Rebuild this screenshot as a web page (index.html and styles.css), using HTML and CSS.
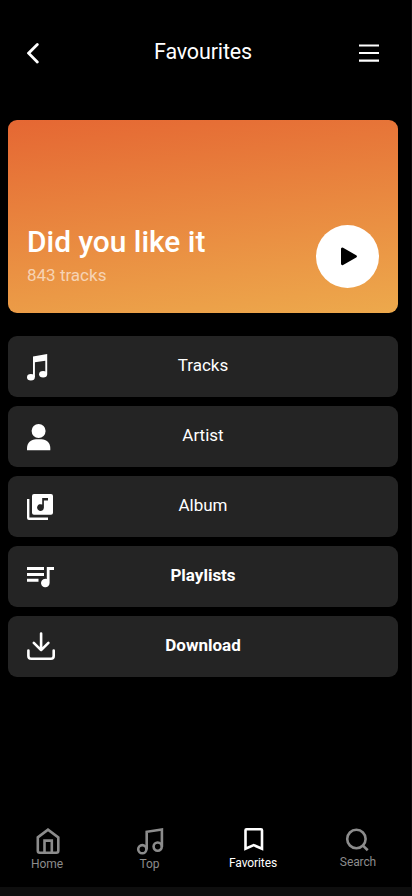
FILE: index.html
```html
<!DOCTYPE html>
<html lang="en">
<head>
<meta charset="utf-8">
<title>Favourites</title>
<link rel="stylesheet" href="styles.css">
</head>
<body>
<div class="screen">
  <header class="header">
    <svg class="back" width="12" height="22" viewBox="0 0 12 22"><path d="M10.300 2.500 1.600 11.200 10.300 20"/></svg>
    <h1 class="title">Favourites</h1>
    <svg class="menu" width="20" height="20" viewBox="0 0 20 20"><path d="M0 3.500h20M0 11h20M0 18.600h20"/></svg>
  </header>
  <section class="hero">
    <div class="hero-text">
      <h2 class="hero-title">Did you like it</h2>
      <p class="hero-sub">843 tracks</p>
    </div>
    <button class="play" aria-label="Play">
      <svg width="63" height="63" viewBox="0 0 63 63"><path d="M26.400 24v14.800L39.500 31.400Z"/></svg>
    </button>
  </section>
  <ul class="list">
    <li class="row">
      <svg class="row-icon" viewBox="0 0 32 36"><path d="M6 8.400 20.200 6V26H18.300V12.800L7.900 14.300V29H6Z"/><ellipse cx="3.900" cy="29.200" rx="3.900" ry="3.200"/><ellipse cx="16.100" cy="26.300" rx="4" ry="3.200"/></svg>
      <span class="label">Tracks</span>
    </li>
    <li class="row">
      <svg class="row-icon" viewBox="0 0 32 36"><circle cx="11.600" cy="13" r="7"/><path d="M0 32.200V30C0 25 4 21.200 9 21.200H14.500C19.500 21.200 23.300 25 23.300 30V32.200Z"/></svg>
      <span class="label">Artist</span>
    </li>
    <li class="row">
      <svg class="row-icon" viewBox="0 0 32 36"><path fill-rule="evenodd" d="M7 6H24a2 2 0 0 1 2 2V24.700a2 2 0 0 1-2 2H7a2 2 0 0 1-2-2V8a2 2 0 0 1 2-2ZM15.200 10V16.600A3.400 3.400 0 1 0 16.900 19.500V12.400H21V10Z"/><path d="M0 11H2.400V29.600H21V32H2a2 2 0 0 1-2-2Z"/></svg>
      <span class="label">Album</span>
    </li>
    <li class="row">
      <svg class="row-icon" viewBox="0 0 32 36"><path d="M0 9H17V12H0ZM0 14.900H17V17.900H0ZM0 20.700H11.500V23.700H0ZM19.800 9H27V12H22.600V25A4.300 4.300 0 1 1 19.800 21Z"/></svg>
      <span class="label strong">Playlists</span>
    </li>
    <li class="row">
      <svg class="row-icon line" viewBox="0 0 32 36"><path d="M14.100 5.500V22M6.800 14.800 14.100 22.100 21.400 14.800M1.400 22.500V28a2.800 2.800 0 0 0 2.800 2.800H23.900a2.800 2.800 0 0 0 2.800-2.800V22.500"/></svg>
      <span class="label strong">Download</span>
    </li>
  </ul>
  <nav class="nav">
    <a class="tab home"><svg width="28" height="28" viewBox="0 0 28 28"><path d="M3.800 10.400 14 2.600 24.300 10.400V23.800a2 2 0 0 1-2 2H5.800a2 2 0 0 1-2-2ZM10.500 25.800V13.600H17.800V25.800"/></svg><span>Home</span></a>
    <a class="tab top"><svg width="28" height="28" viewBox="0 0 28 28"><path d="M10.700 22.500V4.800L25.900 2.500V19.800"/><circle cx="6.300" cy="22.200" r="4.100"/><circle cx="21.700" cy="19.600" r="4.100"/></svg><span>Top</span></a>
    <a class="tab favorites"><svg width="28" height="28" viewBox="0 0 28 28"><path d="M6.500 3.200a1 1 0 0 1 1-1H22a1 1 0 0 1 1 1V21.700L14.700 18.100 6.500 21.700Z"/></svg><span>Favorites</span></a>
    <a class="tab search"><svg width="28" height="28" viewBox="0 0 28 28"><circle cx="12.400" cy="12" r="9.200"/><path d="M18.700 18.400 23.700 23.300"/></svg><span>Search</span></a>
  </nav>
</div>
</body>
</html>
```
FILE: styles.css
```css
* { box-sizing: border-box; margin: 0; padding: 0; }

body {
  background: #0e0e0e;
  font-family: Roboto, "Liberation Sans", sans-serif;
  color: #fff;
  overflow: hidden;
}

.screen {
  display: flex;
  flex-direction: column;
  width: 411px;
  height: 887px;
  background: #000;
}

.header {
  display: grid;
  grid-template-columns: 20px 1fr 20px;
  height: 120px;
  padding: 42px 32px 0 27px;
}

.header svg { fill: none; stroke: #fff; }
.back { stroke-width: 2.8; stroke-linecap: round; }
.menu { stroke-width: 2.2; }

.title {
  margin-top: -2px;
  font-size: 21.5px;
  line-height: 24px;
  letter-spacing: -.15px;
  font-weight: 400;
  text-align: center;
}

.hero {
  display: flex;
  justify-content: space-between;
  width: 390px;
  height: 193px;
  margin-left: 8px;
  padding: 105px 19px 0;
  border-radius: 9px;
  background: linear-gradient(173deg, #e56733, #eda94c);
}

.hero-title { margin-top: -1px; font-size: 29.9px; line-height: 36px; font-weight: 500; white-space: nowrap; }
.hero-sub { margin-top: 5px; font-size: 17px; line-height: 20px; color: rgba(255, 255, 255, .6); }

.play {
  width: 63px;
  height: 63px;
  border: 0;
  border-radius: 50%;
  background: #fff;
}

.play svg { display: block; stroke: #000; stroke-width: 2.8; stroke-linejoin: round; }

.list {
  display: flex;
  flex-direction: column;
  gap: 9px;
  width: 390px;
  margin: 23px 0 0 8px;
  list-style: none;
}

.row {
  display: grid;
  grid-template-columns: 32px 1fr 32px;
  height: 61px;
  padding: 12px 19px 0;
  border-radius: 9px;
  background: #242424;
}

.row-icon { width: 32px; height: 36px; fill: #fff; }
.row-icon.line { fill: none; stroke: #fff; stroke-width: 2.6; stroke-linecap: round; stroke-linejoin: round; }
.label { margin-top: 7px; font-size: 17px; line-height: 20px; text-align: center; }
.strong { font-weight: 700; }

.nav {
  display: grid;
  grid-template-columns: repeat(4, 103px);
  margin: auto 0 0 -5px;
  height: 60px;
  overflow: visible;
}

.tab {
  display: flex;
  flex-direction: column;
  align-items: center;
  font-size: 12px;
  line-height: 14px;
  letter-spacing: -.1px;
  color: #8c8c8c;
}

.tab svg { flex: none; fill: none; stroke: currentColor; stroke-width: 2.6; }
.tab span { margin-top: 2px; }
.home { padding-left: 1px; }
.home svg { margin-left: 1px; }
.favorites { padding-left: 1px; color: #fff; }
.favorites span { margin-top: 1px; }
.search span { margin-top: 0; }
.search { padding-left: 5px; }
```
